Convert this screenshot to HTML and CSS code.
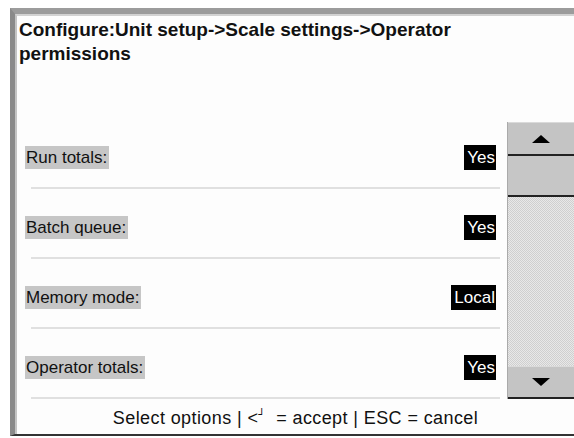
FILE: index.html
```html
<!DOCTYPE html>
<html lang="en">
<head>
    <meta charset="UTF-8">
    <meta name="viewport" content="width=device-width, initial-scale=1.0">
    <title>Operator permissions</title>
    <link rel="stylesheet" href="styles.css">
</head>
<body>
    <div class="frame">
        <div class="screen">
            <h1 class="title">Configure:Unit setup-&gt;Scale settings-&gt;Operator permissions</h1>

            <div class="main">
                <div class="rows">
                    <div class="row">
                        <span class="label">Run totals:</span>
                        <span class="value">Yes</span>
                    </div>
                    <div class="row">
                        <span class="label">Batch queue:</span>
                        <span class="value">Yes</span>
                    </div>
                    <div class="row">
                        <span class="label">Memory mode:</span>
                        <span class="value">Local</span>
                    </div>
                    <div class="row">
                        <span class="label">Operator totals:</span>
                        <span class="value">Yes</span>
                    </div>
                </div>

                <div class="scrollbar">
                    <div class="scroll-btn">
                        <svg width="18" height="8" viewBox="0 0 18 8"><polygon points="9,0 18,8 0,8" fill="#000"/></svg>
                    </div>
                    <div class="thumb"></div>
                    <div class="track"></div>
                    <div class="scroll-btn">
                        <svg width="18" height="8" viewBox="0 0 18 8"><polygon points="0,0 18,0 9,8" fill="#000"/></svg>
                    </div>
                </div>
            </div>

            <div class="footer">Select options | &lt;<span class="enter">┘</span>&nbsp; = accept | ESC = cancel</div>
        </div>
    </div>
</body>
</html>
```

FILE: styles.css
```css
body {
    margin: 0;
    padding: 0;
    background: #fff;
    font-family: 'Liberation Sans', Arial, sans-serif;
    color: #111;
    overflow: hidden;
}
.frame {
    margin: 8px 0 0 10px;
    height: 420px;
    border-top: 6px solid #9c9c9c;
    border-left: 5px solid #8a8a8a;
    border-bottom: 2px solid #333;
}
.screen {
    height: 418px;
    border-top: 2px solid #d2d2d2;
    border-left: 2px solid #c4c4c4;
    background: #fdfdfd;
    display: flex;
    flex-direction: column;
}
.title {
    margin: 0;
    padding: 2px 0 0 2px;
    max-width: 490px;
    font-size: 19px;
    line-height: 24px;
    font-weight: bold;
}
.main {
    margin-top: 53px;
    height: 283px;
    display: flex;
}
.rows {
    width: 485px;
}
.row {
    box-sizing: border-box;
    height: 70px;
    padding: 9px 6px 2px 8px;
    display: flex;
    align-items: center;
    justify-content: space-between;
    background: linear-gradient(#e0e0e0, #e0e0e0) no-repeat 14px 100% / 469px 2px;
}
.label {
    background: #c6c6c6;
    font-size: 17px;
    line-height: 23px;
    padding: 0 2px 0 1px;
}
.value {
    background: #000;
    color: #fff;
    font-size: 17px;
    line-height: 25px;
    padding: 0 1px 0 3px;
}
.scrollbar {
    margin: 3px 0 0 5px;
    flex: 1;
    display: flex;
    flex-direction: column;
    border-left: 1px solid #aaa;
}
.scroll-btn {
    height: 31px;
    background: #c4c4c4;
    border-top: 1px solid #dadada;
    border-bottom: 2px solid #222;
    display: flex;
    align-items: center;
    justify-content: center;
}
.scroll-btn:last-child {
    height: 30px;
}
.thumb {
    height: 39px;
    background: #c6c6c6;
    border-bottom: 2px solid #222;
}
.track {
    flex: 1;
    background: repeating-conic-gradient(#cfcfcf 0 25%, #e8e8e8 0 50%) 0 0 / 2px 2px;
}
.footer {
    flex: 1;
    text-align: center;
    font-size: 18px;
    letter-spacing: 0.4px;
    line-height: 32px;
    color: #111;
}
.enter {
    font-family: 'DejaVu Sans', sans-serif;
    font-size: 11px;
    vertical-align: 6px;
}
```
